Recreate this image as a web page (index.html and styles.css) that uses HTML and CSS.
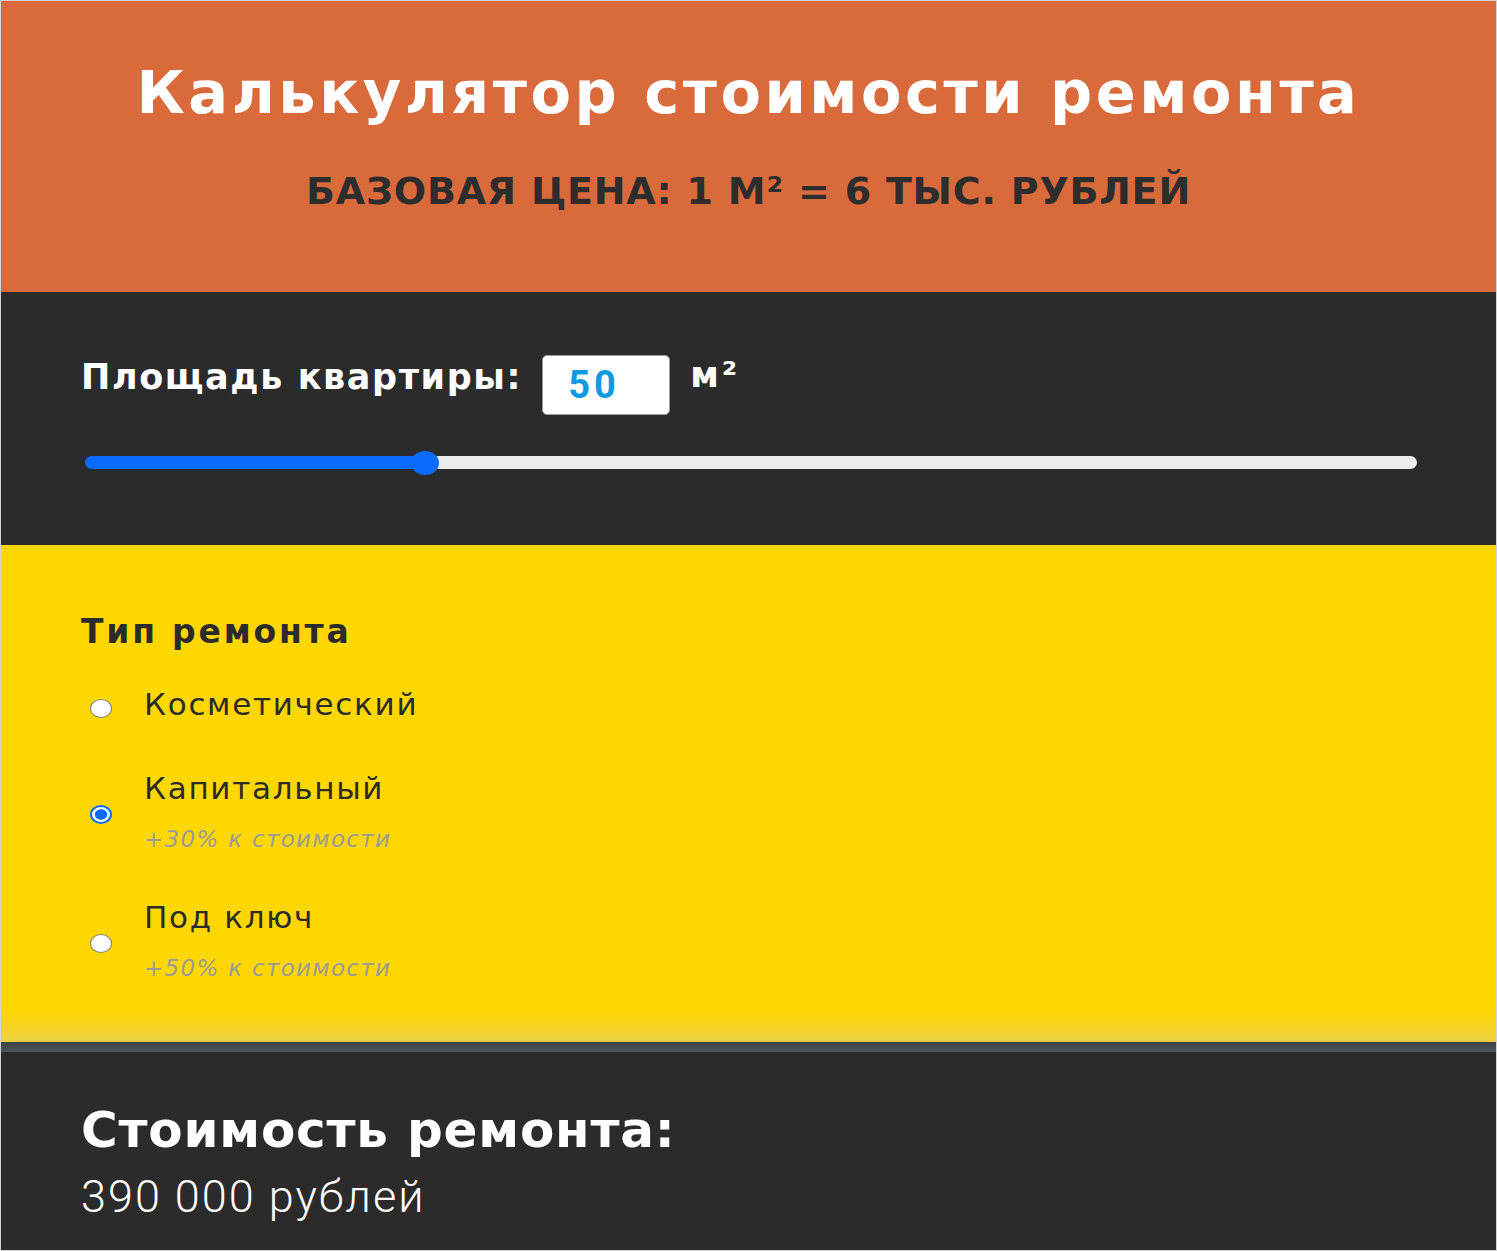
FILE: index.html
```html
<!DOCTYPE html>
<html lang="ru">
<head>
<meta charset="utf-8">
<title>Калькулятор стоимости ремонта</title>
<link rel="stylesheet" href="styles.css">
</head>
<body>
<div class="frame">
  <header class="hero">
    <h1 class="hero-title">Калькулятор стоимости ремонта</h1>
    <p class="hero-sub">БАЗОВАЯ ЦЕНА: 1 М² = 6 ТЫС. РУБЛЕЙ</p>
  </header>

  <section class="area">
    <div class="area-row">
      <label class="area-label" for="area">Площадь квартиры:</label>
      <input class="area-input" id="area" type="text" value="50">
      <span class="area-unit">м²</span>
    </div>
    <input class="area-range" type="range" min="0" max="200" value="50" style="--fill: 25.5%">
  </section>

  <section class="types">
    <h2 class="types-title">Тип ремонта</h2>
    <label class="opt">
      <input class="opt-radio" type="radio" name="type">
      <span class="opt-text"><span class="opt-name">Косметический</span></span>
    </label>
    <label class="opt">
      <input class="opt-radio" type="radio" name="type" checked>
      <span class="opt-text"><span class="opt-name">Капитальный</span><span class="opt-note">+30% к стоимости</span></span>
    </label>
    <label class="opt">
      <input class="opt-radio" type="radio" name="type">
      <span class="opt-text"><span class="opt-name">Под ключ</span><span class="opt-note">+50% к стоимости</span></span>
    </label>
  </section>

  <div class="divider"></div>

  <section class="result">
    <h2 class="result-title">Стоимость ремонта:</h2>
    <p class="result-value">390 000 рублей</p>
  </section>
</div>
</body>
</html>
```

FILE: styles.css
```css
* { box-sizing: border-box; }

html, body {
  margin: 0;
  padding: 0;
  background: #ffffff;
}

.frame {
  width: 1497px;
  height: 1251px;
  border: 1px solid #d4d4d4;
  display: flex;
  flex-direction: column;
  overflow: hidden;
}

/* header */
.hero {
  height: 291px;
  flex: none;
  background: #d96a3b;
  text-align: center;
  padding-top: 60px;
}

.hero-title {
  margin: 0;
  font-family: "DejaVu Sans", sans-serif;
  font-weight: 700;
  font-size: 59px;
  line-height: 64px;
  letter-spacing: 3.5px;
  color: #ffffff;
}

.hero-sub {
  margin: 44px 0 0;
  font-family: "DejaVu Sans", sans-serif;
  font-weight: 700;
  font-size: 38px;
  line-height: 44px;
  letter-spacing: 0.8px;
  color: #2d2d2d;
}

/* area */
.area {
  height: 253px;
  flex: none;
  background: #2b2b2b;
  padding: 63px 80px 0 80px;
}

.area-row {
  display: flex;
  align-items: flex-start;
}

.area-label {
  font-family: "DejaVu Sans", sans-serif;
  font-weight: 700;
  font-size: 35px;
  line-height: 44px;
  letter-spacing: 1.6px;
  color: #ffffff;
  margin-top: 0;
}

.area-input {
  width: 128px;
  height: 60px;
  margin-left: 20px;
  border: 1px solid #9a9a9a;
  border-radius: 5px;
  background: #ffffff;
  padding: 0 0 0 25px;
  font-family: "Roboto", sans-serif;
  font-weight: 700;
  font-size: 38px;
  letter-spacing: 4px;
  color: #0b9be3;
  outline: none;
}

.area-unit {
  margin-left: 20px;
  font-family: "DejaVu Sans", sans-serif;
  font-weight: 700;
  font-size: 35px;
  line-height: 44px;
  letter-spacing: 3px;
  color: #ffffff;
  margin-top: -2px;
}

.area-range {
  -webkit-appearance: none;
  appearance: none;
  display: block;
  width: 1332px;
  height: 13px;
  margin: 41px 0 0 4px;
  border-radius: 7px;
  background: linear-gradient(to right, #0a6cff 0, #0a6cff var(--fill), #ebebeb var(--fill), #ebebeb 100%);
  outline: none;
}

.area-range::-webkit-slider-thumb {
  -webkit-appearance: none;
  appearance: none;
  width: 28px;
  height: 24px;
  border-radius: 50%;
  background: #0a6cff;
  border: none;
}

/* types */
.types {
  height: 497px;
  flex: none;
  background: linear-gradient(to bottom, #fed700 0, #fed700 465px, #ecd043 497px);
  padding: 67px 80px 0 80px;
}

.types-title {
  margin: 0 0 34px;
  font-family: "DejaVu Sans", sans-serif;
  font-weight: 700;
  font-size: 33px;
  line-height: 40px;
  letter-spacing: 2.8px;
  color: #2b2b2b;
}

.opt {
  display: flex;
  align-items: center;
  margin-bottom: 48px;
  cursor: pointer;
}

.opt-radio {
  -webkit-appearance: none;
  appearance: none;
  flex: none;
  width: 22px;
  height: 19px;
  margin: 8px 32px 0 9px;
  border-radius: 50%;
  border: 1.5px solid #808080;
  background: #ffffff;
}

.opt-radio:checked {
  border: 2px solid #0a6cff;
  background: radial-gradient(ellipse at center, #0a6cff 0, #0a6cff 46%, #ffffff 52%);
}

.opt-text {
  display: flex;
  flex-direction: column;
}

.opt-name {
  font-family: "DejaVu Sans", sans-serif;
  font-size: 31px;
  line-height: 36px;
  letter-spacing: 1.7px;
  color: #2b2b2b;
}

.opt-note {
  margin-top: 21px;
  font-family: "DejaVu Sans", sans-serif;
  font-style: italic;
  font-size: 23px;
  line-height: 24px;
  letter-spacing: 1.3px;
  color: #9a9a9a;
}

.divider {
  height: 10px;
  flex: none;
  background: linear-gradient(to bottom, #3c4247, #4b545b);
}

/* result */
.result {
  flex: 1;
  background: #2b2b2b;
  padding: 48px 80px 0 80px;
}

.result-title {
  margin: 0;
  font-family: "DejaVu Sans", sans-serif;
  font-weight: 700;
  font-size: 50px;
  line-height: 60px;
  letter-spacing: 0.8px;
  color: #ffffff;
}

.result-value {
  margin: 12px 0 0;
  font-family: "Roboto", sans-serif;
  font-weight: 300;
  font-size: 45px;
  line-height: 50px;
  letter-spacing: 2px;
  color: #ffffff;
}
```
